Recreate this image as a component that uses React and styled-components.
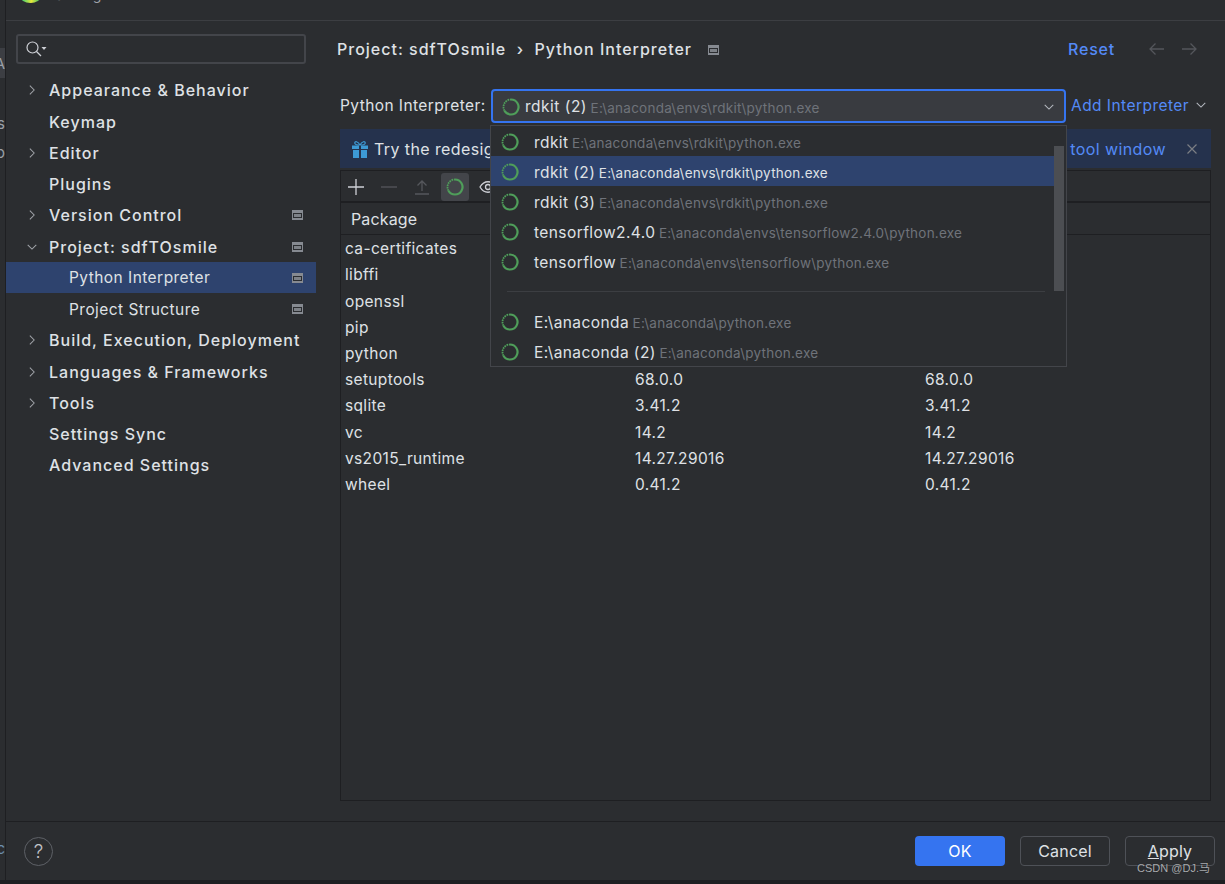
import React from 'react';
import styled, { createGlobalStyle } from 'styled-components';

const GlobalStyle = createGlobalStyle`
  html, body { margin: 0; padding: 0; background: #1e1f22; }
  * { box-sizing: border-box; }
`;

const Page = styled.div`
  position: relative;
  display: flex;
  width: 1225px;
  height: 884px;
  overflow: hidden;
  background: #1e1f22;
  font-family: 'Inter', 'Noto Sans', sans-serif;
  color: #dfe1e5;
`;

const Behind = styled.div`
  display: flex;
  flex: 0 0 6px;
  flex-direction: column;
  height: 880px;
  padding-top: 48px;
  overflow: hidden;
  background: #2b2d30;
  border-right: 1px solid #1e1f22;
  font-size: 15px;
  color: #9aa0a8;
`;
const BehindChip = styled.div`
  display: flex;
  justify-content: flex-end;
  align-items: center;
  height: 30px;
  margin-bottom: 36px;
  background: #3c3e43;
`;
const BehindLetter = styled.div`
  display: flex;
  justify-content: flex-end;
  line-height: 20px;
  height: ${({ $h }) => $h}px;
  color: ${({ $c }) => $c || '#9aa0a8'};
`;

const Dialog = styled.div`
  display: flex;
  flex: 1;
  flex-direction: column;
  height: 880px;
  background: #2b2d30;
`;

const TitleBar = styled.div`
  display: flex;
  flex: 0 0 21px;
  align-items: flex-start;
  gap: 14px;
  padding-left: 14px;
  overflow: hidden;
  border-bottom: 1px solid #3c3e42;
`;
const TitleLogo = styled.div`
  width: 21px;
  height: 14px;
  margin-top: -11px;
  border-radius: 50%;
  background: linear-gradient(90deg, #21c77c, #e6e83a 55%, #27b56c);
`;
const TitleText = styled.div`
  margin-top: -14px;
  font-size: 14px;
  line-height: 17px;
  color: #9fa2a8;
`;

const Body = styled.div`
  display: flex;
  flex: 1;
  min-height: 0;
`;

const Sidebar = styled.nav`
  flex: 0 0 310px;
  padding-top: 13px;
`;
const SearchBox = styled.div`
  display: flex;
  align-items: center;
  width: 290px;
  height: 30px;
  margin: 0 0 10.7px 10px;
  padding-left: 8px;
  border: 2px solid #43454a;
  border-radius: 3px;
`;
const NavRow = styled.div`
  display: flex;
  align-items: center;
  height: 31.25px;
  padding-left: ${({ $sub }) => ($sub ? 63 : 43)}px;
  padding-right: 13px;
  background: ${({ $active }) => ($active ? '#2e436e' : 'transparent')};
  font-size: ${({ $sub }) => ($sub ? 15.5 : 16)}px;
  font-weight: ${({ $sub }) => ($sub ? 400 : 500)};
  letter-spacing: ${({ $sub }) => ($sub ? 0.45 : 1)}px;
  white-space: nowrap;
`;
const NavChevron = styled.span`
  display: flex;
  justify-content: center;
  width: 14px;
  margin: 0 10px 0 -24px;
  color: #a0a3a8;
`;
const NavLabel = styled.span`
  flex: 1;
`;

const Main = styled.main`
  position: relative;
  display: flex;
  flex: 1;
  flex-direction: column;
  padding: 0 14px 20px 24px;
`;
const Header = styled.header`
  display: flex;
  flex: 0 0 56px;
  align-items: center;
  margin-left: -3px;
  font-size: 16px;
  font-weight: 500;
  letter-spacing: 1px;
  white-space: nowrap;
`;
const Crumb = styled.span`
  margin: 0 ${({ $gap }) => $gap}px;
`;
const Reset = styled.span`
  margin-left: auto;
  color: #548af7;
  font-weight: 500;
  letter-spacing: 0.8px;
`;
const HeaderArrows = styled.span`
  display: flex;
  gap: 14px;
  margin: 0 13px 0 33px;
  color: #54565b;
`;

const InterpreterRow = styled.div`
  display: flex;
  flex: 0 0 34px;
  align-items: center;
  margin-top: 12px;
  font-size: 15.5px;
  letter-spacing: 0.42px;
  white-space: nowrap;
`;
const InterpreterLabel = styled.label`
  flex: 0 0 151px;
  margin-top: -2px;
`;
const ComboWrap = styled.div`
  position: relative;
  flex: 0 0 575px;
  height: 34px;
`;
const Combo = styled.div`
  display: flex;
  align-items: center;
  height: 100%;
  padding: 1px 9px 0 9px;
  background: #393b40;
  border: 2px solid #3574f0;
  border-radius: 4px;
`;
const ComboName = styled.span`
  margin-left: 5px;
  letter-spacing: 0.5px;
`;
const PathText = styled.span`
  margin: 2px 0 0 3.5px;
  font-size: 13.5px;
  letter-spacing: 0.24px;
  color: ${({ $bright }) => ($bright ? '#dfe1e5' : '#6f737a')};
`;
const ComboChevron = styled.span`
  display: flex;
  margin-left: auto;
  color: #b4b8bf;
`;
const AddInterpreter = styled.span`
  display: flex;
  align-items: center;
  margin: -2px 0 0 5px;
  color: #548af7;
  letter-spacing: 0.45px;
`;
const AddChevron = styled.span`
  display: flex;
  margin-left: 6px;
  color: #b4b8bf;
`;

const Popup = styled.div`
  position: absolute;
  top: 36px;
  left: -1px;
  z-index: 2;
  display: flex;
  width: 577px;
  height: 242px;
  background: #2b2d30;
  border: 1px solid #43454a;
`;
const PopupList = styled.div`
  flex: 1;
`;
const PopupRow = styled.div`
  display: flex;
  align-items: center;
  height: 30px;
  padding: 2px 0 0 10px;
  background: ${({ $selected }) => ($selected ? '#2e436e' : 'transparent')};
`;
const PopupName = styled.span`
  margin-left: 15px;
  letter-spacing: 0.42px;
`;
const PopupSeparator = styled.div`
  display: flex;
  align-items: center;
  height: 30px;
  padding: 0 9px 0 16px;
  &::after {
    content: '';
    flex: 1;
    height: 1px;
    background: #3c3e42;
  }
`;
const ScrollTrack = styled.div`
  flex: 0 0 12px;
  padding: 20px 2px 0 0;
`;
const ScrollThumb = styled.div`
  height: 145px;
  background: #4c4e52;
`;

const Banner = styled.div`
  display: flex;
  flex: 0 0 39px;
  align-items: center;
  justify-content: space-between;
  margin-top: 6px;
  padding: 0 14px 0 12px;
  background: #25324d;
  font-size: 16px;
  letter-spacing: 0.4px;
  white-space: nowrap;
`;
const BannerText = styled.span`
  display: flex;
  align-items: center;
  gap: 6px;
  padding-top: 1px;
`;
const BannerRight = styled.span`
  display: flex;
  align-items: center;
  gap: 21px;
  color: #548af7;
`;
const BannerClose = styled.span`
  display: flex;
  color: #7b7e84;
`;

const PackagesBox = styled.section`
  display: flex;
  flex: 1;
  flex-direction: column;
  margin-top: 2px;
  border: 1px solid #1e1f22;
`;
const Toolbar = styled.div`
  display: flex;
  flex: 0 0 32px;
  align-items: center;
  gap: 5px;
  padding: 1px 0 0 1px;
  border-bottom: 2px solid #1e1f22;
`;
const ToolButton = styled.span`
  display: flex;
  align-items: center;
  justify-content: center;
  width: 28px;
  height: 28px;
  border-radius: 3px;
  background: ${({ $on }) => ($on ? '#43454a' : 'transparent')};
  color: ${({ $off }) => ($off ? '#55575c' : '#ced0d6')};
`;
const TableHead = styled.div`
  display: grid;
  flex: 0 0 32px;
  grid-template-columns: 290px 290px 1fr;
  align-items: center;
  padding-left: 10px;
  border-bottom: 1px solid #1e1f22;
  font-size: 16px;
  letter-spacing: 0.15px;
`;
const Rows = styled.div`
  padding-top: 0.5px;
`;
const Row = styled.div`
  display: grid;
  grid-template-columns: 290px 290px 1fr;
  align-items: center;
  height: 26.22px;
  padding-left: 4px;
  font-size: 15.5px;
  letter-spacing: 0.35px;
`;

const Footer = styled.footer`
  display: flex;
  flex: 0 0 59px;
  align-items: center;
  padding: 0 10px 0 18px;
  border-top: 1px solid #1e1f22;
`;
const Help = styled.span`
  display: flex;
  align-items: center;
  justify-content: center;
  width: 29px;
  height: 29px;
  margin-right: auto;
  border: 1px solid #5e6167;
  border-radius: 50%;
  font-size: 19px;
  font-weight: 300;
  color: #c2c4c9;
`;
const Btn = styled.button`
  width: 90px;
  height: 30px;
  margin-left: 15px;
  padding: 0;
  background: ${({ $primary }) => ($primary ? '#3574f0' : 'transparent')};
  border: ${({ $primary }) => ($primary ? 'none' : '1px solid #4e5157')};
  border-radius: 4px;
  color: ${({ $primary }) => ($primary ? '#ffffff' : '#dfe1e5')};
  font-family: inherit;
  font-size: 16px;
  letter-spacing: 0.2px;
`;
const Underlined = styled.span`
  text-decoration: underline;
`;
const Watermark = styled.div`
  position: absolute;
  right: 15px;
  bottom: 9px;
  font-family: 'Liberation Sans', 'Noto Sans CJK SC', sans-serif;
  font-size: 11px;
  color: #a9abae;
  text-shadow: 0 0 1px #1e1f22;
`;

const Spinner = () => (
  <svg width="18" height="18" viewBox="0 0 18 18" fill="none" stroke="#4f9e5a" strokeWidth="2.2">
    <path d="M9 1.5A7.5 7.5 0 1 1 2.5 12.75" />
    <path d="M2.5 12.75A7.5 7.5 0 0 1 9 1.5" strokeDasharray="1.6 0.8" strokeWidth="1.8" />
  </svg>
);

const Chevron = ({ dir = 'right', size = 14 }) => (
  <svg width={size} height={size} viewBox="0 0 14 14" fill="none" stroke="currentColor" strokeWidth="1.2">
    {dir === 'right' ? <path d="M4.5 2 9.5 7 4.5 12" /> : <path d="M2 4.5 7 9.5 12 4.5" />}
  </svg>
);

const ProjectIcon = () => (
  <svg width="11" height="10" viewBox="0 0 11 10">
    <rect width="11" height="10" fill="#868a91" />
    <rect x="1" y="3" width="9" height="5" fill="#2b2d30" />
    <rect x="2" y="4" width="7" height="3" fill="#7d8187" />
  </svg>
);

const SearchIcon = () => (
  <svg width="22" height="16" viewBox="0 0 22 16" fill="none" stroke="#ced0d6" strokeWidth="1.2">
    <circle cx="6.5" cy="6.5" r="5.5" />
    <path d="M10.5 10.5 15 15" />
    <path d="M15.5 6h5l-2.5 3z" fill="#ced0d6" stroke="none" />
  </svg>
);

const Arrow = ({ flip }) => (
  <svg width="18" height="14" viewBox="0 0 18 14" fill="none" stroke="currentColor" strokeWidth="1.3">
    {flip ? <path d="M2 7h14M10.5 1.5 16 7l-5.5 5.5" /> : <path d="M16 7H2M7.5 1.5 2 7l5.5 5.5" />}
  </svg>
);

const GiftIcon = () => (
  <svg width="16" height="17" viewBox="0 0 16 17">
    <path d="M8 4C6 0 2.500 0 2.800 2.200 3 4 6 4 8 4c2 0 5 0 5.200-1.800C13.500 0 10 0 8 4z" fill="none" stroke="#3d9ad6" strokeWidth="1.2" />
    <rect x="0" y="4.500" width="16" height="3.500" fill="#3d9ad6" />
    <rect x="1" y="9" width="14" height="8" fill="#3d9ad6" />
    <rect x="7" y="4.500" width="2" height="12.500" fill="#25324d" />
  </svg>
);

const Plus = () => (
  <svg width="18" height="18" viewBox="0 0 18 18" stroke="currentColor" strokeWidth="1.3">
    <path d="M9 1v16M1 9h16" />
  </svg>
);
const Minus = () => (
  <svg width="18" height="18" viewBox="0 0 18 18" stroke="currentColor" strokeWidth="1.3">
    <path d="M1 9h16" />
  </svg>
);
const Upgrade = () => (
  <svg width="16" height="16" viewBox="0 0 16 16" fill="none" stroke="currentColor" strokeWidth="1.3">
    <path d="M8 12V2M3.500 6.500 8 2l4.500 4.500M1 15h14" />
  </svg>
);
const Eye = () => (
  <svg width="18" height="14" viewBox="0 0 18 14" fill="none" stroke="currentColor" strokeWidth="1.3">
    <path d="M1 7c4-7 12-7 16 0-4 7-12 7-16 0z" />
    <circle cx="9" cy="7" r="2.500" />
  </svg>
);
const Close = () => (
  <svg width="10" height="10" viewBox="0 0 10 10" stroke="currentColor" strokeWidth="1.2">
    <path d="M.5.5l9 9M9.500.5l-9 9" />
  </svg>
);

const navItems = [
  { label: 'Appearance & Behavior', chevron: 'right' },
  { label: 'Keymap' },
  { label: 'Editor', chevron: 'right' },
  { label: 'Plugins' },
  { label: 'Version Control', chevron: 'right', icon: true },
  { label: 'Project: sdfTOsmile', chevron: 'down', icon: true },
  { label: 'Python Interpreter', sub: true, icon: true, active: true },
  { label: 'Project Structure', sub: true, icon: true },
  { label: 'Build, Execution, Deployment', chevron: 'right' },
  { label: 'Languages & Frameworks', chevron: 'right' },
  { label: 'Tools', chevron: 'right' },
  { label: 'Settings Sync' },
  { label: 'Advanced Settings' },
];

const interpreters = [
  { name: 'rdkit', path: 'E:\\anaconda\\envs\\rdkit\\python.exe' },
  { name: 'rdkit (2)', path: 'E:\\anaconda\\envs\\rdkit\\python.exe', selected: true },
  { name: 'rdkit (3)', path: 'E:\\anaconda\\envs\\rdkit\\python.exe' },
  { name: 'tensorflow2.4.0', path: 'E:\\anaconda\\envs\\tensorflow2.4.0\\python.exe' },
  { name: 'tensorflow', path: 'E:\\anaconda\\envs\\tensorflow\\python.exe' },
  { separator: true },
  { name: 'E:\\anaconda', path: 'E:\\anaconda\\python.exe' },
  { name: 'E:\\anaconda (2)', path: 'E:\\anaconda\\python.exe' },
];

const packages = [
  ['ca-certificates', '', ''],
  ['libffi', '', ''],
  ['openssl', '', ''],
  ['pip', '', ''],
  ['python', '', ''],
  ['setuptools', '68.0.0', '68.0.0'],
  ['sqlite', '3.41.2', '3.41.2'],
  ['vc', '14.2', '14.2'],
  ['vs2015_runtime', '14.27.29016', '14.27.29016'],
  ['wheel', '0.41.2', '0.41.2'],
];

const App = () => (
  <Page>
    <GlobalStyle />
    <Behind>
      <BehindChip>A</BehindChip>
      <BehindLetter $h={29}>s</BehindLetter>
      <BehindLetter $h={696}>o</BehindLetter>
      <BehindLetter $h={20} $c="#6c8fb0">c</BehindLetter>
    </Behind>
    <Dialog>
      <TitleBar>
        <TitleLogo />
        <TitleText>Settings</TitleText>
      </TitleBar>
      <Body>
        <Sidebar>
          <SearchBox>
            <SearchIcon />
          </SearchBox>
          {navItems.map((item) => (
            <NavRow key={item.label} $sub={item.sub} $active={item.active}>
              {item.chevron && (
                <NavChevron>
                  <Chevron dir={item.chevron} size={12} />
                </NavChevron>
              )}
              <NavLabel>{item.label}</NavLabel>
              {item.icon && <ProjectIcon />}
            </NavRow>
          ))}
        </Sidebar>
        <Main>
          <Header>
            <span>Project: sdfTOsmile</span>
            <Crumb $gap={10.5}>›</Crumb>
            <span>Python Interpreter</span>
            <Crumb $gap={16}>
              <ProjectIcon />
            </Crumb>
            <Reset>Reset</Reset>
            <HeaderArrows>
              <Arrow />
              <Arrow flip />
            </HeaderArrows>
          </Header>
          <InterpreterRow>
            <InterpreterLabel>Python Interpreter:</InterpreterLabel>
            <ComboWrap>
              <Combo>
                <Spinner />
                <ComboName>rdkit (2)</ComboName>
                <PathText>E:\anaconda\envs\rdkit\python.exe</PathText>
                <ComboChevron>
                  <Chevron dir="down" size={12} />
                </ComboChevron>
              </Combo>
              <Popup>
                <PopupList>
                  {interpreters.map((it, i) =>
                    it.separator ? (
                      <PopupSeparator key={i} />
                    ) : (
                      <PopupRow key={i} $selected={it.selected}>
                        <Spinner />
                        <PopupName>{it.name}</PopupName>
                        <PathText $bright={it.selected}>{it.path}</PathText>
                      </PopupRow>
                    )
                  )}
                </PopupList>
                <ScrollTrack>
                  <ScrollThumb />
                </ScrollTrack>
              </Popup>
            </ComboWrap>
            <AddInterpreter>
              Add Interpreter
              <AddChevron>
                <Chevron dir="down" size={12} />
              </AddChevron>
            </AddInterpreter>
          </InterpreterRow>
          <Banner>
            <BannerText>
              <GiftIcon />
              Try the redesigned packaging support
            </BannerText>
            <BannerRight>
              tool window
              <BannerClose>
                <Close />
              </BannerClose>
            </BannerRight>
          </Banner>
          <PackagesBox>
            <Toolbar>
              <ToolButton>
                <Plus />
              </ToolButton>
              <ToolButton $off>
                <Minus />
              </ToolButton>
              <ToolButton $off>
                <Upgrade />
              </ToolButton>
              <ToolButton $on>
                <Spinner />
              </ToolButton>
              <ToolButton>
                <Eye />
              </ToolButton>
            </Toolbar>
            <TableHead>
              <span>Package</span>
            </TableHead>
            <Rows>
              {packages.map(([name, version, latest]) => (
                <Row key={name}>
                  <span>{name}</span>
                  <span>{version}</span>
                  <span>{latest}</span>
                </Row>
              ))}
            </Rows>
          </PackagesBox>
        </Main>
      </Body>
      <Footer>
        <Help>?</Help>
        <Btn $primary>OK</Btn>
        <Btn>Cancel</Btn>
        <Btn>
          <Underlined>A</Underlined>pply
        </Btn>
      </Footer>
    </Dialog>
    <Watermark>CSDN @DJ.马</Watermark>
  </Page>
);

export default App;
